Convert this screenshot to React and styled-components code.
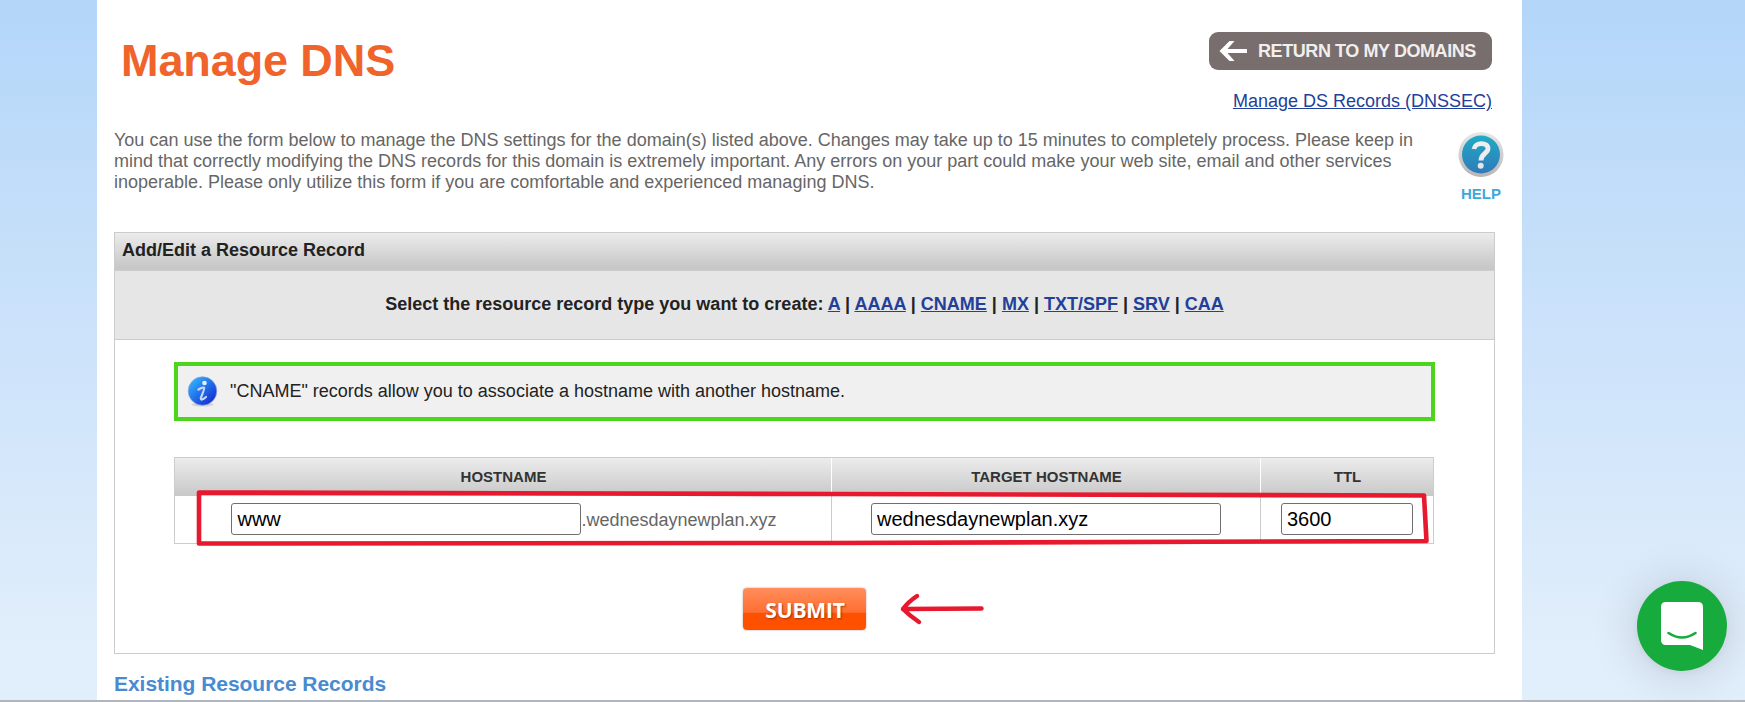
import React from "react";
import styled, { createGlobalStyle } from "styled-components";

const GlobalStyle = createGlobalStyle`
  * {
    box-sizing: border-box;
  }
  body {
    margin: 0;
    overflow: hidden;
    font-family: "Liberation Sans", Arial, sans-serif;
    font-size: 18px;
    line-height: 21px;
    color: #222;
  }
`;
const BackgroundStyled = styled.div`
  display: flex;
  flex-direction: column;
  align-items: center;
  height: 702px;
  overflow: hidden;
  background: linear-gradient(#b3d6f9, #cde3fa 50%, #e1eefb 92%, #e2effb);
`;
const PageStyled = styled.main`
  width: 1425px;
  height: 700px;
  margin-right: 126px;
  padding: 32px 27px 0 17px;
  flex: none;
  overflow: hidden;
  background: #fff;
`;
const BottomEdgeStyled = styled.div`
  width: 100%;
  height: 2px;
  background: #b1b6be;
`;
const HeaderStyled = styled.header`
  display: flex;
  justify-content: space-between;
  height: 98px;
  padding: 0 3px 0 7px;
`;
const TitleStyled = styled.h1`
  margin: 3px 0 0;
  font-size: 45px;
  line-height: 52px;
  letter-spacing: -0.1px;
  color: #f0632b;
`;
const HeaderActionsStyled = styled.div`
  display: flex;
  flex-direction: column;
  align-items: flex-end;
`;
const ReturnButtonStyled = styled.button`
  display: flex;
  align-items: center;
  gap: 11px;
  width: 283px;
  height: 38px;
  margin-bottom: 21px;
  padding: 0 0 0 10px;
  border: 0;
  border-radius: 9px;
  background: #786e6d;
  color: #f1eeee;
  font: bold 18px "Liberation Sans", Arial, sans-serif;
  letter-spacing: -0.42px;
  white-space: nowrap;
`;
const LinkStyled = styled.a`
  color: #223f99;
  text-decoration: underline;
`;
const IntroStyled = styled.section`
  display: flex;
  justify-content: space-between;
  height: 102px;
`;
const IntroTextStyled = styled.p`
  width: 1310px;
  margin: 0;
  color: #666;
`;
const HelpStyled = styled.div`
  display: flex;
  flex-direction: column;
  align-items: center;
  width: 48px;
  margin-right: -10px;
  color: #3da8da;
  font-size: 15px;
  font-weight: bold;
  line-height: 17px;
  svg {
    margin: 1px 0 6px;
    flex: none;
  }
`;
const PanelStyled = styled.section`
  height: 422px;
  border: 1px solid #ccc;
`;
const PanelHeaderStyled = styled.h2`
  height: 38px;
  margin: 0;
  padding: 7px 7px 0;
  border-bottom: 1px solid #ccc;
  background: linear-gradient(#ececec, #c8c8c8 90%);
  font-size: 18px;
`;
const TypeRowStyled = styled.div`
  height: 69px;
  padding-top: 23px;
  border-bottom: 1px solid #ccc;
  background: #e6e6e6;
  font-weight: bold;
  text-align: center;
`;
const PanelBodyStyled = styled.div`
  padding: 22px 59px 0;
`;
const InfoStyled = styled.div`
  display: flex;
  align-items: center;
  gap: 12px;
  height: 59px;
  margin-bottom: 36px;
  padding-left: 9px;
  border: 4px solid #4cd51a;
  background: #f0f0f0;
`;
const TableStyled = styled.div`
  position: relative;
  display: grid;
  grid-template-columns: 656px 429px 173px;
  grid-template-rows: 38px 47px;
  width: 1260px;
  border: 1px solid #ccc;
`;
const HeadCellStyled = styled.div`
  padding: 8px 0 0 1px;
  border-left: ${(props) => (props.$first ? "0" : "1px solid #fff")};
  background: linear-gradient(#ececec, #c8c8c8);
  color: #333;
  font-size: 15px;
  font-weight: bold;
  text-align: center;
`;
const CellStyled = styled.div`
  display: flex;
  align-items: center;
  justify-content: center;
  padding: ${(props) => (props.$first ? "0 0 1px 2px" : "0 0 1px")};
  border-left: ${(props) => (props.$first ? "0" : "1px solid #ccc")};
  color: #666;
`;
const SuffixStyled = styled.span`
  padding-top: 2px;
`;
const InputStyled = styled.input`
  width: ${(props) => props.$width}px;
  height: 32px;
  padding: 0 5px;
  border: 1px solid #6f6f6f;
  border-radius: 3px;
  background: #fff;
  color: #000;
  font: 20px "Liberation Sans", Arial, sans-serif;
`;
// the marker strokes lie over the table row
const MarkerStyled = styled.svg`
  position: absolute;
  top: 29px;
  left: 19px;
  pointer-events: none;
`;
const SubmitRowStyled = styled.div`
  display: flex;
  align-items: center;
  gap: 33px;
  margin: 44px 0 0 569px;
`;
const SubmitButtonStyled = styled.button`
  width: 123px;
  height: 42px;
  padding: 1px 0 0 1px;
  border: 0;
  border-radius: 4px;
  background: linear-gradient(#ff8e5c, #ff6e31 58%, #ff5000 60%, #ff5000);
  box-shadow: 0 0 2px rgba(90, 60, 50, 0.5);
  color: #fff;
  font: bold 21px "Open Sans", sans-serif;
  letter-spacing: -0.2px;
  text-shadow: 1px 1px 2px rgba(110, 40, 0, 0.65);
`;
const SectionTitleStyled = styled.h2`
  margin: 18px 0 0;
  font-size: 21px;
  line-height: 24px;
  letter-spacing: -0.04px;
  color: #488bd0;
`;
const ChatButtonStyled = styled.button`
  position: fixed;
  right: 18px;
  bottom: 31px;
  width: 90px;
  height: 90px;
  padding: 0;
  border: 0;
  border-radius: 50%;
  background: #17ab3d;
  box-shadow: 0 2px 9px rgba(0, 0, 0, 0.06), 0 3px 48px rgba(0, 0, 0, 0.16);
  svg {
    display: block;
  }
`;

const RECORD_TYPES = ["A", "AAAA", "CNAME", "MX", "TXT/SPF", "SRV", "CAA"];

const BackArrow = () => (
  <svg width="28" height="22" viewBox="0 0 28 22">
    <path
      d="M0.500 11L10.500 1H15.500L8.500 9H28V13H8.500L15.500 21H10.500Z"
      fill="#fff"
    />
  </svg>
);

const HelpIcon = () => (
  <svg width="48" height="48" viewBox="0 0 48 48">
    <defs>
      <linearGradient id="helpRing" x1="0" y1="0" x2="0" y2="1">
        <stop offset="0" stopColor="#e8e8e8" />
        <stop offset="1" stopColor="#b9b5b5" />
      </linearGradient>
      <linearGradient id="helpFill" x1="0" y1="0" x2="0" y2="1">
        <stop offset="0" stopColor="#20abc4" />
        <stop offset="1" stopColor="#3179b9" />
      </linearGradient>
    </defs>
    <circle cx="24" cy="23.500" r="22.5" fill="url(#helpRing)" />
    <circle cx="24" cy="23.500" r="19" fill="url(#helpFill)" />
    <path
      d="M17 18C18 11 31 11 31 17.500C31 22.500 24 22.500 24 29.500"
      fill="none"
      stroke="#eee"
      strokeWidth="4.8"
    />
    <circle cx="23.700" cy="34.800" r="3" fill="#e6e6e6" />
  </svg>
);

const InfoIcon = () => (
  <svg width="31" height="31" viewBox="0 0 31 31">
    <defs>
      <linearGradient id="infoFill" x1="0.1" y1="0.1" x2="0.85" y2="0.9">
        <stop offset="0" stopColor="#35b4fb" />
        <stop offset="0.5" stopColor="#2270ea" />
        <stop offset="1" stopColor="#1430cf" />
      </linearGradient>
    </defs>
    <ellipse cx="15.5" cy="28.5" rx="11" ry="2" fill="#d3d3d8" />
    <circle cx="15.5" cy="15" r="14.3" fill="url(#infoFill)" stroke="#8fa5dc" strokeWidth="0.6" />
    <circle cx="17.5" cy="7" r="2.3" fill="#e6efff" />
    <path
      d="M11.5 13.5Q15 11 17.2 11.8Q17.8 12.5 13.8 22Q13.8 25.5 19 21"
      fill="none"
      stroke="#c9d8fa"
      strokeWidth="2.2"
      strokeLinecap="round"
    />
  </svg>
);

const App = () => {
  return (
    <>
      <GlobalStyle />
      <BackgroundStyled>
        <PageStyled>
          <HeaderStyled>
            <TitleStyled>Manage DNS</TitleStyled>
            <HeaderActionsStyled>
              <ReturnButtonStyled>
                <BackArrow />
                RETURN TO MY DOMAINS
              </ReturnButtonStyled>
              <LinkStyled href="#">Manage DS Records (DNSSEC)</LinkStyled>
            </HeaderActionsStyled>
          </HeaderStyled>
          <IntroStyled>
            <IntroTextStyled>
              You can use the form below to manage the DNS settings for the
              domain(s) listed above. Changes may take up to 15 minutes to
              completely process. Please keep in mind that correctly modifying
              the DNS records for this domain is extremely important. Any
              errors on your part could make your web site, email and other
              services inoperable. Please only utilize this form if you are
              comfortable and experienced managing DNS.
            </IntroTextStyled>
            <HelpStyled>
              <HelpIcon />
              HELP
            </HelpStyled>
          </IntroStyled>
          <PanelStyled>
            <PanelHeaderStyled>Add/Edit a Resource Record</PanelHeaderStyled>
            <TypeRowStyled>
              Select the resource record type you want to create:{" "}
              {RECORD_TYPES.map((type, index) => (
                <React.Fragment key={type}>
                  {index > 0 && " | "}
                  <LinkStyled href="#">{type}</LinkStyled>
                </React.Fragment>
              ))}
            </TypeRowStyled>
            <PanelBodyStyled>
              <InfoStyled>
                <InfoIcon />
                <span>
                  "CNAME" records allow you to associate a hostname with
                  another hostname.
                </span>
              </InfoStyled>
              <TableStyled>
                <HeadCellStyled $first>HOSTNAME</HeadCellStyled>
                <HeadCellStyled>TARGET HOSTNAME</HeadCellStyled>
                <HeadCellStyled>TTL</HeadCellStyled>
                <CellStyled $first>
                  <InputStyled $width={350} defaultValue="www" />
                  <SuffixStyled>.wednesdaynewplan.xyz</SuffixStyled>
                </CellStyled>
                <CellStyled>
                  <InputStyled $width={350} defaultValue="wednesdaynewplan.xyz" />
                </CellStyled>
                <CellStyled>
                  <InputStyled $width={132} defaultValue="3600" />
                </CellStyled>
                <MarkerStyled
                  width="1240"
                  height="64"
                  fill="none"
                  stroke="#e6192e"
                  strokeWidth="4.6"
                  strokeLinecap="round"
                  strokeLinejoin="round"
                >
                  <path d="M5 5.5L637 7L1230 8.500L1232.500 54L637 56L5 56.500Z" />
                </MarkerStyled>
              </TableStyled>
              <SubmitRowStyled>
                <SubmitButtonStyled>SUBMIT</SubmitButtonStyled>
                <svg
                  width="88"
                  height="34"
                  fill="none"
                  stroke="#e6192e"
                  strokeWidth="4.500"
                  strokeLinecap="round"
                  strokeLinejoin="round"
                >
                  <path d="M82.500 16.500L4 17M18 4Q9 10 4 17Q11 24 20 30" />
                </svg>
              </SubmitRowStyled>
            </PanelBodyStyled>
          </PanelStyled>
          <SectionTitleStyled>Existing Resource Records</SectionTitleStyled>
        </PageStyled>
        <BottomEdgeStyled />
        <ChatButtonStyled aria-label="Chat">
          <svg width="90" height="90" viewBox="0 0 90 90">
            <path
              d="M29 21H61Q66 21 66 26V69L53 64H29Q24 64 24 59V26Q24 21 29 21Z"
              fill="#fff"
            />
            <path
              d="M31.500 52Q45 61 58.500 52"
              fill="none"
              stroke="#17ab3d"
              strokeWidth="2.600"
              strokeLinecap="round"
            />
          </svg>
        </ChatButtonStyled>
      </BackgroundStyled>
    </>
  );
};

export default App;
